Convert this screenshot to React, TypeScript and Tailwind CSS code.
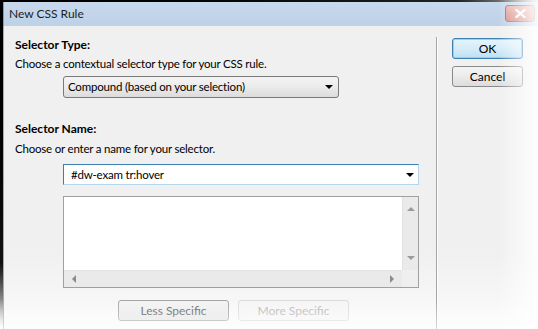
import React from "react";

const font = { fontFamily: 'Lato, "Liberation Sans", Arial, sans-serif' };

function Triangle({ dir, color = "#000", size = 4 }: { dir: "up" | "down" | "left" | "right"; color?: string; size?: number }) {
  const s = size;
  let pts = "";
  if (dir === "down") pts = `0,0 ${2 * s},0 ${s},${s}`;
  if (dir === "up") pts = `0,${s} ${2 * s},${s} ${s},0`;
  if (dir === "left") pts = `${s},0 ${s},${2 * s} 0,${s}`;
  if (dir === "right") pts = `0,0 0,${2 * s} ${s},${s}`;
  const w = dir === "up" || dir === "down" ? 2 * s : s;
  const h = dir === "up" || dir === "down" ? s : 2 * s;
  return (
    <svg width={w} height={h} viewBox={`0 0 ${w} ${h}`}>
      <polygon points={pts} fill={color} />
    </svg>
  );
}

export default function App() {
  return (
    <div className="relative w-[538px] h-[329px] overflow-hidden bg-white text-[11.5px] tracking-[-0.2px] text-black" style={font}>
      <div className="flex h-full">
        {/* left dark edge */}
        <div className="w-[3px] h-full bg-gradient-to-b from-black via-[#111] via-80% to-white" />
        <div className="flex-1 flex flex-col">
          {/* top dark edge */}
          <div className="h-[2px] bg-gradient-to-r from-black via-[#222] via-85% to-[#bbb]" />
          {/* title bar */}
          <div className="h-[24px] flex items-center justify-between pl-[5px] pr-[3px] bg-gradient-to-b from-[#c8d9ec] to-[#bdd1e7] border-l border-[#8a9bb0]">
            <span className="text-[12px] tracking-normal text-[#1e1e1e]">New CSS Rule</span>
            <div className="w-[30px] h-[17px] mb-[1px] rounded-[3px] border border-[#a76a6a] bg-gradient-to-b from-[#e9b1ab] to-[#d48b84] flex items-center justify-center">
              <svg width="11" height="9" viewBox="0 0 11 9">
                <path d="M1.5 1 L9.5 8 M9.5 1 L1.5 8" stroke="#fff" strokeWidth="2.2" strokeLinecap="square" />
              </svg>
            </div>
          </div>
          {/* body */}
          <div className="flex-1 flex bg-gradient-to-b from-[#f0f0f0] via-[#f0f0f0] via-75% to-[#fbfbfb] border-l border-[#a9a9a9]">
            {/* left panel */}
            <div className="w-[432px] flex flex-col pl-[11px] pt-[11px]">
              <div className="h-[15px] leading-[15px] font-bold text-[12px] tracking-normal">Selector Type:</div>
              <div className="h-[15px] leading-[15px] mt-[4px]">Choose a contextual selector type for your CSS rule.</div>
              <div className="mt-[5px] ml-[48px] w-[276px] h-[22px] rounded-[3px] border border-[#7a7a7a] bg-gradient-to-b from-[#f4f4f4] via-[#ebebeb] via-50% to-[#dcdcdc] flex items-center justify-between pl-[4px] pr-[5px]">
                <span>Compound (based on your selection)</span>
                <Triangle dir="down" size={4} />
              </div>
              <div className="h-[15px] leading-[15px] font-bold text-[12px] tracking-normal mt-[23px]">Selector Name:</div>
              <div className="h-[15px] leading-[15px] mt-[5px]">Choose or enter a name for your selector.</div>
              <div className="mt-[8px] ml-[48px] w-[356px] h-[21px] border border-[#3c7fb1] border-b-[#b5d5ec] border-r-[#b5d5ec] bg-white flex items-center justify-between pl-[7px] pr-[4px]">
                <span>#dw-exam tr:hover</span>
                <Triangle dir="down" size={4} />
              </div>
              <div className="mt-[11px] ml-[48px] w-[356px] h-[92px] border border-[#a0a0a0] bg-white flex flex-col">
                <div className="flex-1 flex">
                  <div className="flex-1" />
                  <div className="w-[16px] bg-[#eaeaea] border-l border-[#e2e2e2] flex flex-col items-center justify-between py-[10px]">
                    <Triangle dir="up" color="#9a9a9a" size={4} />
                    <Triangle dir="down" color="#9a9a9a" size={4} />
                  </div>
                </div>
                <div className="h-[17px] flex">
                  <div className="flex-1 bg-[#eaeaea] border-t border-[#e2e2e2] flex items-center justify-between px-[8px]">
                    <Triangle dir="left" color="#8a8a8a" size={4} />
                    <Triangle dir="right" color="#8a8a8a" size={4} />
                  </div>
                  <div className="w-[16px] bg-[#efefef]" />
                </div>
              </div>
              <div className="mt-[12px] ml-[103px] flex gap-[9px]">
                <div className="w-[111px] h-[21px] rounded-[3px] border border-[#a2a2a2] bg-gradient-to-b from-[#f4f4f4] to-[#e4e4e4] flex items-center justify-center text-[#555] text-[12px] tracking-normal">
                  Less Specific
                </div>
                <div className="w-[111px] h-[21px] rounded-[3px] border border-[#dadada] bg-[#f5f5f5] flex items-center justify-center text-[#b4b4b4] text-[12px] tracking-normal">
                  More Specific
                </div>
              </div>
            </div>
            {/* separator */}
            <div className="mt-[11px] w-px bg-[#a4a4a4]" />
            <div className="w-px mt-[11px] bg-white" />
            {/* right panel */}
            <div className="flex flex-col pl-[14px] pt-[12px] gap-[7px]">
              <div className="w-[71px] h-[21px] rounded-[3px] border border-[#3c7fb1] bg-gradient-to-b from-[#e5f4fc] via-[#d6ecf8] via-50% to-[#bde0f3] shadow-[inset_0_0_0_1px_#8fd3f5] flex items-center justify-center text-[12px] tracking-normal">
                OK
              </div>
              <div className="w-[71px] h-[21px] rounded-[3px] border border-[#8a8a8a] bg-gradient-to-b from-[#f4f4f4] via-[#ebebeb] via-50% to-[#dcdcdc] flex items-center justify-center text-[12px] tracking-normal">
                Cancel
              </div>
            </div>
          </div>
        </div>
      </div>
      {/* right-edge fade of the window shadow */}
      <div className="pointer-events-none absolute right-0 top-0 bottom-0 w-[40px] bg-gradient-to-r from-transparent to-white/90" />
      <div className="pointer-events-none absolute left-0 right-0 bottom-0 h-[30px] bg-gradient-to-b from-transparent to-white/60" />
    </div>
  );
}
